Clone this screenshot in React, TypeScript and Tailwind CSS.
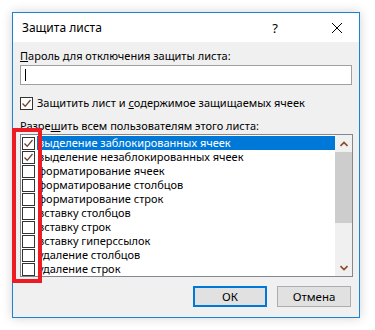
import React from "react";

const ITEMS = [
  { label: "выделение заблокированных ячеек", checked: true, selected: true },
  { label: "выделение незаблокированных ячеек", checked: true },
  { label: "форматирование ячеек" },
  { label: "форматирование столбцов" },
  { label: "форматирование строк" },
  { label: "вставку столбцов" },
  { label: "вставку строк" },
  { label: "вставку гиперссылок" },
  { label: "удаление столбцов" },
  { label: "удаление строк" },
];

function Check({ checked }: { checked?: boolean }) {
  return (
    <div className="w-[13px] h-[13px] border border-[#333] bg-white flex items-center justify-center shrink-0">
      {checked && (
        <svg width="11" height="11" viewBox="0 0 11 11">
          <path d="M1.5 5.5 L4.2 8.3 L9.5 2" fill="none" stroke="#6e4331" strokeWidth="1.3" />
        </svg>
      )}
    </div>
  );
}

export default function App() {
  return (
    <div className="w-[375px] h-[330px] bg-white pl-[12px] pt-[12px]" style={{ fontFamily: '"Noto Sans", sans-serif' }}>
      <div className="relative w-[348px] h-[306px] border border-[#1883d7] bg-[#f0f0f0] flex flex-col shadow-[0_0_10px_rgba(0,0,0,0.18)] text-[11px] text-black leading-[14px]">
        {/* Title bar */}
        <div className="h-[29px] bg-white flex items-center pl-[9px] shrink-0">
          <span className="text-[12px]">Защита листа</span>
          <span className="ml-auto mr-[53px] text-[13px]">?</span>
          <svg width="12" height="12" viewBox="0 0 12 12" className="mr-[16px]">
            <path d="M1 1 L11 11 M11 1 L1 11" stroke="#000" strokeWidth="1" />
          </svg>
        </div>

        <div className="flex flex-col px-[7px]">
          <div className="mt-[7px] h-[14px]">
            <span className="underline">П</span>ароль для отключения защиты листа:
          </div>
          <div className="mt-[2px] h-[20px] w-[332px] bg-white border border-[#a0a0a0] flex items-center pl-[4px]">
            <div className="w-px h-[12px] bg-black" />
          </div>

          <div className="mt-[11px] flex items-center gap-[4px] h-[14px]">
            <Check checked />
            <span>
              Защитить лист и <span className="underline">с</span>одержимое защищаемых ячеек
            </span>
          </div>

          <div className="mt-[9px] h-[14px]">
            Разре<span className="underline">ш</span>ить всем пользователям этого листа:
          </div>

          <div className="mt-[1px] h-[143px] w-[333px] border border-[#828790] bg-white flex">
            <div className="flex-1 pt-px">
              {ITEMS.map((it) => (
                <div key={it.label} className="h-[14px] flex items-center">
                  <div className="pl-[1px] pr-[2px]">
                    <Check checked={it.checked} />
                  </div>
                  <div
                    className={
                      "h-[14px] flex-1 pl-[1px] leading-[14px] whitespace-nowrap " +
                      (it.selected ? "bg-[#0078d7] text-white" : "")
                    }
                  >
                    {it.label}
                  </div>
                </div>
              ))}
            </div>
            <div className="w-[17px] bg-[#f0f0f0] flex flex-col items-center">
              <div className="h-[17px] flex items-center justify-center">
                <svg width="8" height="6" viewBox="0 0 8 6">
                  <path d="M0.5 5 L4 1.5 L7.5 5" fill="none" stroke="#8b4a2b" strokeWidth="1.6" />
                </svg>
              </div>
              <div className="w-[17px] h-[71px] bg-[#cdcdcd]" />
              <div className="flex-1" />
              <div className="h-[17px] flex items-center justify-center">
                <svg width="8" height="6" viewBox="0 0 8 6">
                  <path d="M0.5 1 L4 4.5 L7.5 1" fill="none" stroke="#8b4a2b" strokeWidth="1.6" />
                </svg>
              </div>
            </div>
          </div>

          <div className="mt-[9px] flex justify-end gap-[10px] pr-[1px]">
            <button className="w-[74px] h-[21px] bg-[#e1e1e1] border-2 border-[#0078d7] text-[11.5px]">ОК</button>
            <button className="w-[74px] h-[21px] bg-[#e1e1e1] border border-[#adadad] text-[11.5px]">Отмена</button>
          </div>
        </div>

        {/* red annotation */}
        <div className="absolute left-[-1px] top-[115px] w-[30px] h-[155px] border-4 border-[#ed1c24]" />
      </div>
    </div>
  );
}
